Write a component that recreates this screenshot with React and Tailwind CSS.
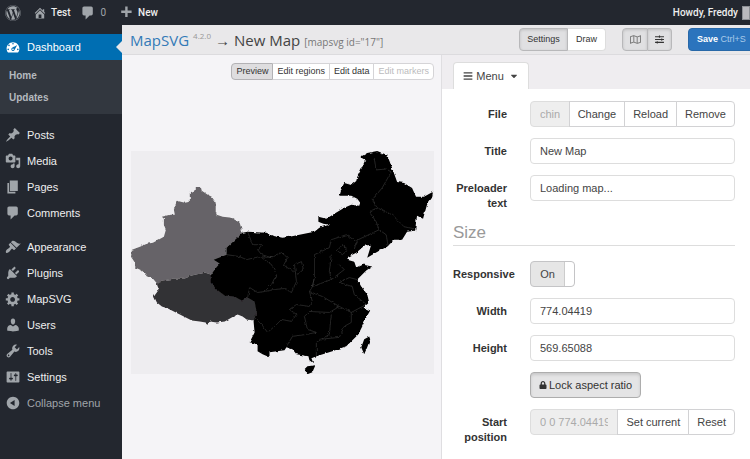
import { FaBars, FaCaretDown, FaLock, FaRegMap, FaSlidersH, FaWordpress } from 'react-icons/fa'

const icons = {
  home: 'M16 8.5l1.53 1.53-1.06 1.06L10 4.6l-6.47 6.49-1.06-1.06L10 2.5l4 4v-2h2v4zm-6-2.46l6 5.99V18H4v-5.97zM12 17v-5H8v5h4z',
  plus: 'M17 7v3h-5v5H9v-5H4V7h5V2h3v5h5z',
  dashboard: 'M3.76 17.01h12.48C17.34 15.63 18 13.9 18 12c0-4.41-3.58-8-8-8s-8 3.59-8 8c0 1.9.66 3.63 1.76 5.01zM9 6c0-.55.45-1 1-1s1 .45 1 1c0 .56-.45 1-1 1s-1-.44-1-1zM4 8c0-.55.45-1 1-1s1 .45 1 1c0 .56-.45 1-1 1s-1-.44-1-1zm4.52 3.4c.84-.83 6.51-3.5 6.51-3.5s-2.66 5.68-3.49 6.51c-.84.84-2.18.84-3.02 0-.83-.83-.83-2.18 0-3.01zM3 13c0-.55.45-1 1-1s1 .45 1 1c0 .56-.45 1-1 1s-1-.44-1-1zm6 0c0 .55.45 1 1 1s1-.45 1-1c0-.56-.45-1-1-1s-1 .44-1 1zm6 0c0-.55.45-1 1-1s1 .45 1 1c0 .56-.45 1-1 1s-1-.44-1-1z',
  post: 'M10.44 3.02l1.82-1.82 6.36 6.35-1.83 1.82c-1.05-.68-2.48-.57-3.41.36l-.75.75c-.92.93-1.04 2.35-.35 3.41l-1.83 1.82-2.41-2.41-2.8 2.79c-.42.42-3.38 2.71-3.8 2.29s1.86-3.39 2.28-3.81l2.79-2.79L4.1 9.36l1.83-1.82c1.05.69 2.48.57 3.4-.36l.75-.75c.93-.92 1.05-2.35.36-3.41z',
  media: 'M13 11V4c0-.55-.45-1-1-1h-1.67L9 1H5L3.67 3H2c-.55 0-1 .45-1 1v7c0 .55.45 1 1 1h10c.55 0 1-.45 1-1zM7 4.5c1.38 0 2.5 1.12 2.5 2.5S8.38 9.5 7 9.5 4.5 8.38 4.5 7 5.62 4.5 7 4.5zM14 6h5v10.5c0 1.38-1.12 2.5-2.5 2.5S14 17.88 14 16.5s1.12-2.5 2.5-2.5c.17 0 .34.02.5.05V9h-3V6zm-4 8.05V13h2v3.5c0 1.38-1.12 2.5-2.5 2.5S7 17.88 7 16.5 8.12 14 9.5 14c.17 0 .34.02.5.05z',
  page: 'M6 15V2h10v13H6zm-1 1h8v2H3V5h2v11z',
  comment: 'M5 2h9c1.1 0 2 .9 2 2v7c0 1.1-.9 2-2 2h-2l-5 5v-5H5c-1.1 0-2-.9-2-2V4c0-1.1.9-2 2-2z',
  appearance: 'M14.48 11.06L7.41 3.99l1.5-1.5c.5-.56 2.3-.47 3.51.32 1.21.8 1.43 1.28 2.91 2.1 1.18.64 2.45 1.26 4.45.85zm-.71.71L6.7 4.7 4.93 6.47c-.39.39-.39 1.02 0 1.41l1.06 1.06c.39.39.39 1.03 0 1.42-.6.6-1.43 1.11-2.21 1.69-.35.26-.7.53-1.01.84C1.43 14.23.4 16.08 1.4 17.07c.99 1 2.84-.03 4.18-1.36.31-.31.58-.66.85-1.02.57-.78 1.08-1.61 1.69-2.21.39-.39 1.02-.39 1.41 0l1.06 1.06c.39.39 1.02.39 1.41 0z',
  plugins: 'M13.11 4.36L9.87 7.6 8 5.73l3.24-3.24c.35-.34 1.05-.2 1.56.32.52.51.66 1.21.31 1.55zm-8 1.77l.91-1.12 9.01 9.01-1.19.84c-.71.71-2.63 1.16-3.82 1.16H6.14L4.9 17.26c-.59.59-1.54.59-2.12 0-.59-.58-.59-1.53 0-2.12l1.24-1.24v-3.88c0-1.13.4-3.19 1.09-3.89zm7.26 3.97l3.24-3.24c.34-.35 1.04-.21 1.55.31.52.51.66 1.21.31 1.55l-3.24 3.25z',
  generic: 'M18 12h-2.18c-.17.7-.44 1.35-.81 1.93l1.54 1.54-2.1 2.1-1.54-1.54c-.58.36-1.23.63-1.91.79V19H8v-2.18c-.68-.16-1.33-.43-1.91-.79l-1.54 1.54-2.12-2.12 1.54-1.54c-.36-.58-.63-1.23-.79-1.91H1V9.03h2.17c.16-.7.44-1.35.8-1.94L2.43 5.55l2.1-2.1 1.54 1.54c.58-.37 1.24-.64 1.93-.81V2h3v2.18c.68.16 1.33.43 1.91.79l1.54-1.54 2.12 2.12-1.54 1.54c.36.59.64 1.24.8 1.94H18V12zm-8.5 1.5c1.66 0 3-1.34 3-3s-1.34-3-3-3-3 1.34-3 3 1.34 3 3 3z',
  users: 'M10 9.25c-2.27 0-2.73-3.44-2.73-3.44C7 4.02 7.82 2 9.97 2c2.16 0 2.98 2.02 2.71 3.81 0 0-.41 3.44-2.68 3.44zm0 2.57L12.72 10c2.39 0 4.52 2.33 4.52 4.53v2.49s-3.65 1.13-7.24 1.13c-3.65 0-7.24-1.13-7.24-1.13v-2.49c0-2.25 1.94-4.48 4.47-4.48z',
  tools: 'M16.68 9.77c-1.34 1.34-3.3 1.67-4.95.99l-5.41 6.52c-.99.99-2.59.99-3.58 0s-.99-2.59 0-3.57l6.52-5.42c-.68-1.65-.35-3.61.99-4.95 1.28-1.28 3.12-1.62 4.72-1.06l-2.89 2.89 2.82 2.82 2.86-2.87c.53 1.58.18 3.39-1.08 4.65zM3.81 16.21c.4.39 1.04.39 1.43 0 .4-.4.4-1.04 0-1.43-.39-.4-1.03-.4-1.43 0-.39.39-.39 1.03 0 1.43z',
  settings: 'M18 16V4c0-.55-.45-1-1-1H3c-.55 0-1 .45-1 1v12c0 .55.45 1 1 1h14c.55 0 1-.45 1-1zM8 11h1c.55 0 1 .45 1 1s-.45 1-1 1H8v1.5c0 .28-.22.5-.5.5s-.5-.22-.5-.5V13H6c-.55 0-1-.45-1-1s.45-1 1-1h1V5.5c0-.28.22-.5.5-.5s.5.22.5.5V11zm5-2h-1c-.55 0-1-.45-1-1s.45-1 1-1h1V5.5c0-.28.22-.5.5-.5s.5.22.5.5V7h1c.55 0 1 .45 1 1s-.45 1-1 1h-1v5.5c0 .28-.22.5-.5.5s-.5-.22-.5-.5V9z',
  collapse: 'M10 2.16c4.33 0 7.84 3.51 7.84 7.84s-3.51 7.84-7.84 7.84S2.16 14.33 2.16 10 5.71 2.16 10 2.16zm2 11.72V6.12L6.18 9.97z',
}

const contentMenu = [
  ['Posts', 'post'],
  ['Media', 'media'],
  ['Pages', 'page'],
  ['Comments', 'comment'],
]

const adminMenu = [
  ['Appearance', 'appearance'],
  ['Plugins', 'plugins'],
  ['MapSVG', 'generic'],
  ['Users', 'users'],
  ['Tools', 'tools'],
  ['Settings', 'settings'],
]

function Icon({ name, className = 'size-4' }) {
  return (
    <svg className={`shrink-0 ${className}`} viewBox="0 0 20 20" fill="currentColor" fillRule="evenodd" aria-hidden="true">
      <path d={icons[name]} />
    </svg>
  )
}

function AdminBar() {
  return (
    <header className="flex h-[25px] items-center overflow-hidden bg-[#23272f] pl-[5px] font-['Roboto','Liberation_Sans',sans-serif] text-[10px] font-medium whitespace-nowrap text-[#eeeeee]">
      <a href="#wp" aria-label="WordPress" className="text-[#a0a5aa]"><FaWordpress className="size-4" /></a>
      <a href="#site" className="ml-3 flex items-center gap-1">
        <Icon name="home" className="size-[14px] text-[#a0a5aa]" />
        Test
      </a>
      <a href="#comments" className="ml-[10px] flex items-center gap-1 font-normal text-[#a0a5aa]">
        <Icon name="comment" className="size-4" />
        0
      </a>
      <a href="#new" className="ml-3 flex items-center gap-1">
        <Icon name="plus" className="size-4 text-[#a0a5aa]" />
        New
      </a>
      <a href="#profile" className="ml-auto flex items-center gap-1">
        Howdy, Freddy
        <span className="h-[14px] w-2 border border-[#8c8f94] bg-[#b9b9bd]"></span>
      </a>
    </header>
  )
}

function MenuItem({ label, icon }) {
  return (
    <a href={`#${icon}`} className="flex h-[26px] items-center gap-[6px] pl-[5px]">
      <Icon name={icon} className="size-4 text-[#a0a5aa]" />
      {label}
    </a>
  )
}

function Sidebar() {
  return (
    <nav className="w-[122px] shrink-0 bg-[#23272f] pt-[9px] text-[11px] text-[#eeeeee]">
      <a href="#dashboard" className="relative flex h-[26px] items-center gap-[6px] bg-[#006eb2] pl-[5px] text-white">
        <Icon name="dashboard" />
        Dashboard
        <span className="absolute top-[7px] right-0 border-y-[6px] border-r-[6px] border-y-transparent border-r-[#e9e8ea]"></span>
      </a>
      <div className="flex flex-col bg-[#32373f] py-[5px] pl-[9px] text-[10px] leading-[22px] font-bold text-[#b4b9be]">
        <a href="#home">Home</a>
        <a href="#updates">Updates</a>
      </div>
      <div className="mt-2">
        {contentMenu.map(([label, icon]) => <MenuItem key={label} label={label} icon={icon} />)}
      </div>
      <div className="mt-2">
        {adminMenu.map(([label, icon]) => <MenuItem key={label} label={label} icon={icon} />)}
        <button type="button" className="flex h-[26px] items-center gap-[6px] pl-[5px] text-[#a0a5aa]">
          <Icon name="collapse" />
          Collapse menu
        </button>
      </div>
    </nav>
  )
}

function TitleBar() {
  const pressed = 'border border-[#b8b8ba] bg-[#e0e0e2] shadow-[inset_0_1px_3px_rgba(0,0,0,0.15)]'
  return (
    <div className="flex h-[30px] items-center overflow-hidden border-b border-[#dcdbde] bg-[#e9e8ea] pl-2 whitespace-nowrap">
      <h1 className="flex items-center font-['Open_Sans','Noto_Sans',sans-serif] text-[15px] leading-6 text-[#444444]">
        <a href="#mapsvg" className="text-[#337ab7]">MapSVG</a>
        <sup className="ml-1 text-[8px] text-[#999999]">4.2.0</sup>
        <span className="mx-1 text-[15px]">→</span>
        New Map
        <small className="ml-1 pt-1 text-[10px] text-[#777777]">[mapsvg id="17"]</small>
      </h1>
      <div className="-mr-2 ml-auto flex h-[23px] shrink-0 text-[9px] text-[#333333]">
        <button type="button" className={`w-[49px] rounded-l-sm ${pressed}`}>Settings</button>
        <button type="button" className="w-[38px] rounded-r-sm border border-l-0 border-[#dddddd] bg-white">Draw</button>
        <button type="button" aria-label="Map" className={`ml-4 flex w-[26px] items-center justify-center rounded-l-sm ${pressed}`}>
          <FaRegMap className="size-[11px] text-[#777777]" />
        </button>
        <button type="button" aria-label="Controls" className={`flex w-6 items-center justify-center rounded-r-sm border-l-0 ${pressed}`}>
          <FaSlidersH className="size-[9px]" />
        </button>
        <button type="button" className="ml-4 w-[70px] rounded-sm border border-[#2868a8] bg-[#2b74bd] pl-2 text-left font-bold text-white">
          Save <span className="font-normal text-[#a9cbea]">Ctrl+S</span>
        </button>
      </div>
    </div>
  )
}

function ChinaMap() {
  return (
    <svg viewBox="131 151 304 224" className="w-full bg-[#eeedf0]" strokeLinejoin="round" role="img" aria-label="Map of China">
      <defs>
        <filter id="coast" x="-5%" y="-5%" width="110%" height="110%">
          <feTurbulence type="fractalNoise" baseFrequency="0.25" numOctaves="2" seed="4" />
          <feDisplacementMap in="SourceGraphic" scale="3" xChannelSelector="R" yChannelSelector="G" />
        </filter>
      </defs>
      <g filter="url(#coast)">
        <path fill="#666467" d="M131 257L132 250L140 247L147 244L153 243L164 237L166 230L164 225L164 219L162 217L170 215L175 215L174 210L177 201L185 203L190 202L190 193L196 190L196 187L201 187L202 191L208 195L212 197L216 203L216 212L217 215L223 217L232 218L240 223L243 233L240 270L214 276L205 273L192 276L185 279L175 279L163 281L158 285L152 278L147 277L142 271L135 268L135 263Z" />
        <path fill="#333134" d="M157 285L163 281L175 279L185 279L192 276L205 273L214 276L258 298L257 312L255 321L247 320L243 317L238 315L232 318L225 322L217 323L210 322L207 326L206 323L200 322L192 321L178 314L168 309L162 307L157 303L154 297L159 290Z" />
        <path fill="#000" d="M243 233L248 232L267 233L273 236L283 238L290 237L305 234L315 232L320 228L330 225L324 224L319 222L319 217L327 219L335 214L345 208L352 205L360 206L361 203L358 199L352 196L340 196L342 189L345 183L352 185L357 181L358 177L363 167L366 160L361 157L368 153L378 151L388 155L393 168L398 182L405 183L413 188L417 197L425 197L434 192L433 198L428 205L424 219L418 216L417 223L416 231L408 232L403 240L395 240L388 247L380 251L368 258L372 245L365 246L357 253L349 257L348 260L355 262L357 268L363 265L373 267L367 271L358 280L362 287L368 295L370 303L364 308L371 311L367 318L363 327L359 335L347 347L333 352L317 357L312 359L314 364L310 361L309 357L297 355L293 350L287 348L285 351L270 353L270 358L263 355L258 352L258 345L250 343L255 333L254 322L257 312L255 302L248 298L242 301L235 297L225 296L217 290L211 283L211 276L215 270L220 264L214 260L227 255L227 248Z" />
        <path fill="#000" d="M305 370L308 367L316 366L313 373L308 375ZM370 337L371 340L368 348L365 355L362 348L365 340Z" />
      </g>
      <g filter="url(#coast)" fill="none" stroke="#3c3c3c" strokeWidth="0.6">
        <path d="M248 232L253 245L263 245L258 250L262 255L272 258L282 253L288 258L284 266L295 272M227 255L240 257L247 260L260 257L272 258M262 258L272 265L277 275L272 285L265 292L258 293L250 288L248 298M265 292L275 290L285 289L292 293L297 282L295 265L302 262L304 270L298 275" />
        <path d="M255 318L262 325L268 333L275 327L282 320L292 322L297 315L290 310L297 305L310 307L313 302L310 292L313 287L315 278L315 255L330 248L332 240L347 235L357 242L355 250M315 278L313 287L332 280L330 272L332 255M310 292L323 297L340 307L330 313L310 312L305 317L308 330L317 333M332 315L330 335L317 343L317 357M352 313L352 323L345 327L340 338L320 340M340 283L353 287L355 295L367 305L352 313L340 307M287 347L293 337L307 335L317 333M332 280L345 270L340 265M340 283L350 278L358 280" />
        <path d="M375 158L377 170L387 169L392 172L383 188L373 200L378 208L370 212L377 222L380 230L359 240L357 245M378 208L393 215L405 227L415 229M380 230L387 235L389 246M338 251L343 245L349 250L343 255Z" />
      </g>
    </svg>
  )
}

function MapPanel() {
  const tab = 'border border-[#d5d4d7] bg-white px-1'
  return (
    <section className="min-w-0 flex-1 border-r border-[#dfdee1] bg-[#f5f4f7] pt-2 pr-[7px] pl-[9px]">
      <div className="flex h-[17px] justify-end text-[9px] whitespace-nowrap text-[#333333]">
        <button type="button" className="rounded-l-sm border border-[#b3b2b5] bg-[#dedddf] px-1">Preview</button>
        <button type="button" className={`border-l-0 ${tab}`}>Edit regions</button>
        <button type="button" className={`-ml-px ${tab}`}>Edit data</button>
        <button type="button" disabled className={`-ml-px rounded-r-sm text-[#bbbbbd] ${tab}`}>Edit markers</button>
      </div>
      <div className="mt-[71px]">
        <ChinaMap />
      </div>
    </section>
  )
}

const fieldBase = 'h-[26px] w-full min-w-0 border border-[#dddddd] px-[9px]'
const inputStyle = `${fieldBase} rounded-sm bg-white text-[#444444]`
const disabledStyle = `${fieldBase} rounded-l-sm bg-[#eeeeee] text-[#aaaaaa]`
const buttonStyle = '-ml-px h-[26px] shrink-0 border border-[#d2d2d4] bg-white px-2 last:rounded-r-sm'

function Row({ label, id, children }) {
  return (
    <div className="flex h-[26px]">
      <label htmlFor={id} className="w-[54px] shrink-0 pt-[6px] text-right leading-[15px] font-bold text-[#333333]">{label}</label>
      <div className="ml-[23px] flex min-w-0 flex-1">{children}</div>
    </div>
  )
}

function SettingsPanel() {
  return (
    <section className="w-[308px] shrink-0 bg-white text-[11px] text-[#444444]">
      <div className="flex bg-[#efedf0] pt-[7px] pl-[11px]">
        <button type="button" className="flex h-[27px] w-[76px] items-center justify-center gap-[3px] rounded-t-sm border border-b-0 border-[#dddddd] bg-white">
          <FaBars className="size-[10px]" />
          Menu
          <FaCaretDown className="ml-[2px] size-[10px]" />
        </button>
      </div>
      <form className="flex flex-col gap-[11px] pt-3 pr-[15px] pl-[11px]">
        <Row label="File" id="file">
          <input id="file" disabled defaultValue="china.svg" className={disabledStyle} />
          <button type="button" className={buttonStyle}>Change</button>
          <button type="button" className={buttonStyle}>Reload</button>
          <button type="button" className={buttonStyle}>Remove</button>
        </Row>
        <Row label="Title" id="title">
          <input id="title" defaultValue="New Map" className={inputStyle} />
        </Row>
        <Row label="Preloader text" id="preloader">
          <input id="preloader" defaultValue="Loading map..." className={inputStyle} />
        </Row>
        <h2 className="mt-[10px] border-b border-[#dddddd] pb-px text-[17px] leading-[22px] text-[#999999]">Size</h2>
        <div className="mt-1 flex flex-col gap-[11px]">
          <Row label="Responsive" id="responsive">
            <span className="relative flex w-[45px] rounded-sm border border-[#c4c4c6] bg-[#e6e6e6]">
              <input id="responsive" type="checkbox" defaultChecked className="absolute inset-0 size-full opacity-0" />
              <span className="flex flex-1 items-center justify-center">On</span>
              <span className="w-[10px] rounded-r-sm border-l border-[#cccccc] bg-white"></span>
            </span>
          </Row>
          <Row label="Width" id="width">
            <input id="width" defaultValue="774.04419" className={inputStyle} />
          </Row>
          <Row label="Height" id="height">
            <input id="height" defaultValue="569.65088" className={inputStyle} />
          </Row>
          <Row>
            <button type="button" className="flex items-center gap-[2px] rounded-sm border border-[#adadad] bg-[#e4e4e5] px-2 text-[#333333] shadow-[inset_0_2px_3px_rgba(0,0,0,0.12)]">
              <FaLock className="size-2" />
              Lock aspect ratio
            </button>
          </Row>
          <Row label="Start position" id="start">
            <input id="start" disabled defaultValue="0 0 774.04419 569.65088" className={disabledStyle} />
            <button type="button" className={buttonStyle}>Set current</button>
            <button type="button" className={buttonStyle}>Reset</button>
          </Row>
        </div>
      </form>
    </section>
  )
}

function App() {
  return (
    <div className="flex min-h-screen flex-col bg-white font-['Liberation_Sans',Arial,sans-serif]">
      <AdminBar />
      <div className="flex flex-1">
        <Sidebar />
        <main className="flex min-w-0 flex-1 flex-col">
          <TitleBar />
          <div className="flex flex-1">
            <MapPanel />
            <SettingsPanel />
          </div>
        </main>
      </div>
    </div>
  )
}

export default App
